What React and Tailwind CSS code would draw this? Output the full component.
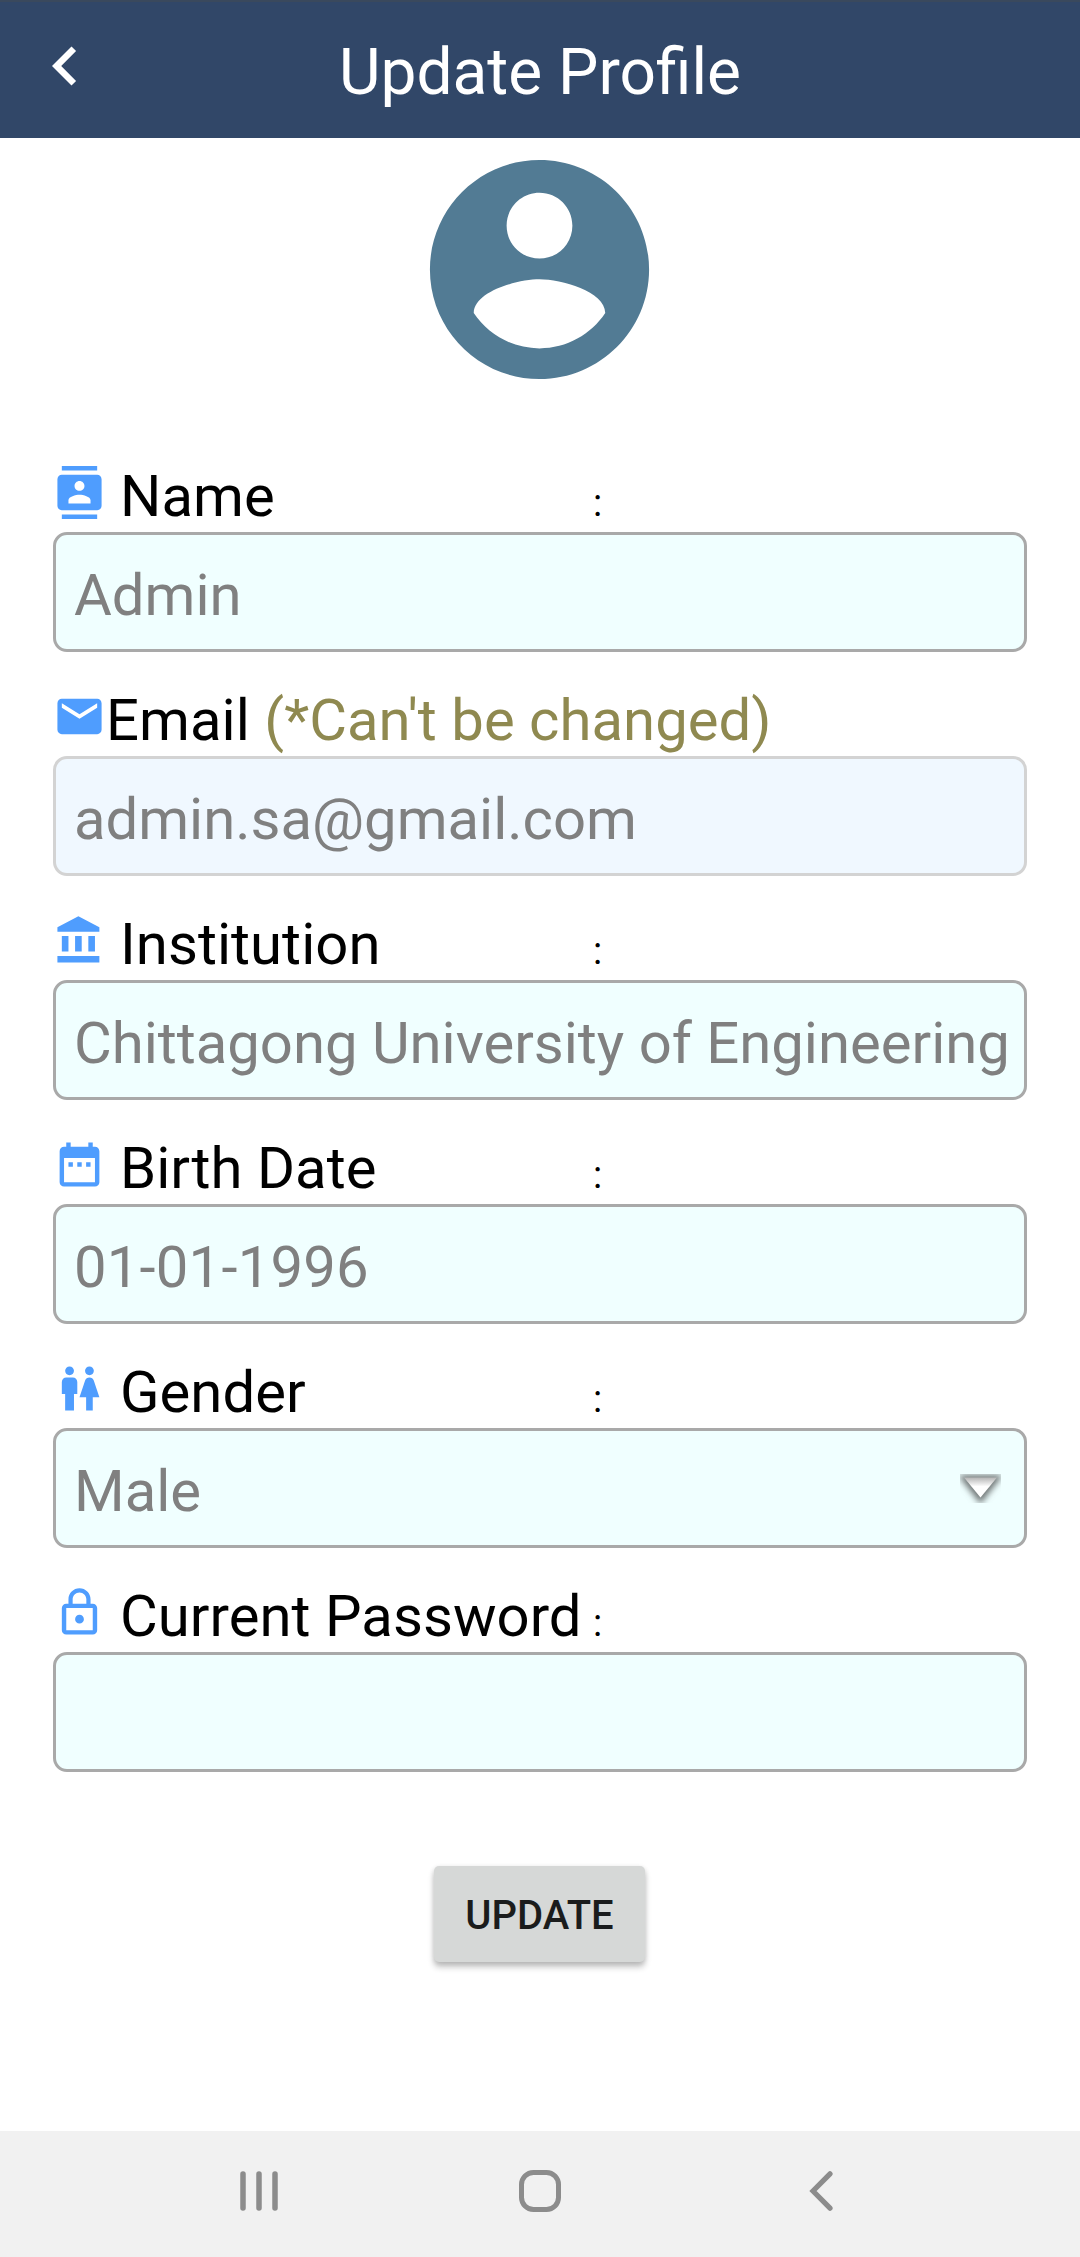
const ICONS = {
  contact:
    "M20 0H4v2h16V0zM4 24h16v-2H4v2zM20 4H4c-1.1 0-2 .9-2 2v12c0 1.1.9 2 2 2h16c1.1 0 2-.9 2-2V6c0-1.1-.9-2-2-2zm-8 2.75c1.24 0 2.25 1.01 2.25 2.25s-1.01 2.25-2.25 2.25S9.75 10.24 9.75 9 10.76 6.75 12 6.75zM17 17H7v-1.5c0-1.67 3.33-2.5 5-2.5s5 .83 5 2.5V17z",
  mail: "M20 4H4c-1.1 0-1.99.9-1.99 2L2 18c0 1.1.9 2 2 2h16c1.1 0 2-.9 2-2V6c0-1.1-.9-2-2-2zm0 4l-8 5-8-5V6l8 5 8-5v2z",
  bank: "M4 10v7h3v-7H4zm6 0v7h3v-7h-3zM2 22h19v-3H2v3zm14-12v7h3v-7h-3zm-4.500-9L2 6v2h19V6l-9.500-5z",
  calendar:
    "M9 11H7v2h2v-2zm4 0h-2v2h2v-2zm4 0h-2v2h2v-2zm2-7h-1V2h-2v2H8V2H6v2H5c-1.11 0-1.990.9-1.990 2L3 20c0 1.100.890 2 2 2h14c1.100 0 2-.9 2-2V6c0-1.100-.9-2-2-2zm0 16H5V9h14v11z",
  people:
    "M5.500 22v-7.500H4V9c0-1.100.9-2 2-2h3c1.100 0 2 .9 2 2v5.500H9.500V22h-4zM18 22v-6h3l-2.540-7.630C18.180 7.550 17.420 7 16.560 7h-.12c-.86 0-1.630.550-1.900 1.370L12 16h3v6h3zM7.500 6c1.110 0 2-.89 2-2s-.89-2-2-2-2 .89-2 2 .89 2 2 2zm9 0c1.110 0 2-.89 2-2s-.89-2-2-2-2 .89-2 2 .89 2 2 2z",
  lock: "M12 17c1.100 0 2-.9 2-2s-.9-2-2-2-2 .9-2 2 .9 2 2 2zm6-9h-1V6c0-2.760-2.240-5-5-5S7 3.240 7 6v2H6c-1.100 0-2 .9-2 2v10c0 1.100.9 2 2 2h12c1.100 0 2-.9 2-2V10c0-1.100-.9-2-2-2zM8.900 6c0-1.710 1.390-3.100 3.100-3.100s3.100 1.390 3.100 3.100v2H8.900V6zM18 20H6V10h12v10z",
};

const FIELDS = [
  { icon: "contact", label: "Name", value: "Admin" },
  { icon: "mail", label: "Email", note: "(*Can't be changed)", value: "admin.sa@gmail.com", disabled: true },
  { icon: "bank", label: "Institution", value: "Chittagong University of Engineering" },
  { icon: "calendar", label: "Birth Date", value: "01-01-1996", numeric: true },
  { icon: "people", label: "Gender", value: "Male", select: true },
  { icon: "lock", label: "Current Password", value: "" },
];

function DropdownArrow() {
  return (
    <svg width="41" height="29" viewBox="0 0 41 29" className="mr-[5px] mt-[1px] shrink-0 overflow-hidden">
      <defs>
        <linearGradient id="arrowFill" x1="0" y1="0" x2="0" y2="1">
          <stop offset="0" stopColor="#b5b5b5" />
          <stop offset="0.45" stopColor="#ffffff" />
        </linearGradient>
        <filter id="arrowShadow" x="-50%" y="-50%" width="200%" height="200%">
          <feGaussianBlur stdDeviation="3" />
        </filter>
      </defs>
      <path d="M-2 1H43L20.500 30Z" fill="#6f7676" filter="url(#arrowShadow)" />
      <path d="M4 3.500H37L20.500 23.500Z" fill="url(#arrowFill)" />
    </svg>
  );
}

function Field({ icon, label, note, value, disabled, select, numeric }) {
  return (
    <div className="mb-[38px]">
      <div className="flex h-[66px] items-start">
        <svg viewBox="0 0 24 24" className="size-[53px] shrink-0" fill="#4f9dfe">
          <path d={ICONS[icon]} />
        </svg>
        {note ? (
          <p className="whitespace-pre text-[58px] leading-[60px] tracking-[0.04px] text-black">
            {label} <span className="text-[#8f8950]">{note}</span>
          </p>
        ) : (
          <div className="ml-[14px] flex items-baseline leading-[60px] text-black">
            <span className="w-[473px] whitespace-nowrap text-[58px] tracking-[0.05px]">{label}</span>
            <span className="text-[38px]">:</span>
          </div>
        )}
      </div>
      <div
        className={
          "flex h-[120px] items-center justify-between rounded-[14px] border-[3px] px-[18px] " +
          (disabled ? "border-[#d3d3d3] bg-[#f0f8ff]" : "border-[#a9a9a9] bg-[#f0ffff]")
        }
      >
        <span
          className={
            "overflow-hidden whitespace-nowrap pt-[6px] text-[58px] leading-[70px] text-[#808080] " +
            (numeric ? "tracking-[0.2px]" : "")
          }
        >
          {value}
        </span>
        {select && <DropdownArrow />}
      </div>
    </div>
  );
}

export default function App() {
  return (
    <div className="flex h-[2257px] w-[1080px] flex-col overflow-hidden bg-white font-['Roboto',sans-serif]">
      <header className="grid h-[138px] shrink-0 grid-cols-[1fr_auto_1fr] items-start border-t-2 border-[#3a495d] bg-[#314768]">
        <svg viewBox="0 0 24 24" className="ml-[26px] mt-[25px] size-[78px]" fill="white">
          <path d="M15.410 7.410 14 6l-6 6 6 6 1.410-1.410L10.830 12z" />
        </svg>
        <h1 className="mt-[31px] text-[64px] leading-[80px] text-white">Update Profile</h1>
      </header>

      <main className="flex flex-1 flex-col px-[53px]">
        <svg viewBox="0 0 24 24" className="mb-[65px] ml-[355px] size-[263px] shrink-0" fill="#527b94">
          <path d="M12 2C6.480 2 2 6.480 2 12s4.480 10 10 10 10-4.480 10-10S17.520 2 12 2zm0 3c1.660 0 3 1.340 3 3s-1.340 3-3 3-3-1.340-3-3 1.340-3 3-3zm0 14.200c-2.500 0-4.710-1.280-6-3.220.030-1.990 4-3.080 6-3.080 1.990 0 5.970 1.090 6 3.080-1.290 1.940-3.500 3.220-6 3.220z" />
        </svg>

        {FIELDS.map((field) => (
          <Field key={field.label} {...field} />
        ))}

        <button className="ml-[381px] mt-[56px] h-[96px] w-[211px] rounded-[5px] bg-[#d6d8d7] pt-[4px] text-[40px] font-medium leading-[92px] text-[#1b1c1c] shadow-[0_5px_6px_rgba(0,0,0,0.24),0_1px_5px_rgba(0,0,0,0.10)]">
          UPDATE
        </button>
      </main>

      <nav className="flex h-[126px] shrink-0 items-start bg-[#f1f1f1] pl-[240px] pt-[39px]">
        <svg width="38" height="42" viewBox="0 0 38 42" stroke="#8c8c8c" strokeWidth="5.500" strokeLinecap="round">
          <path d="M3 4v34M19 4v34M35 4v34" />
        </svg>
        <svg width="42" height="42" viewBox="0 0 42 42" className="ml-[241px]" fill="none" stroke="#8c8c8c" strokeWidth="5">
          <rect x="2.500" y="2.500" width="37" height="37" rx="12" />
        </svg>
        <svg width="24" height="42" viewBox="0 0 24 42" className="ml-[248px]" fill="none" stroke="#8c8c8c" strokeWidth="5.200" strokeLinecap="round">
          <path d="M21 3.800 4 21 21 38.200" />
        </svg>
      </nav>
    </div>
  );
}
